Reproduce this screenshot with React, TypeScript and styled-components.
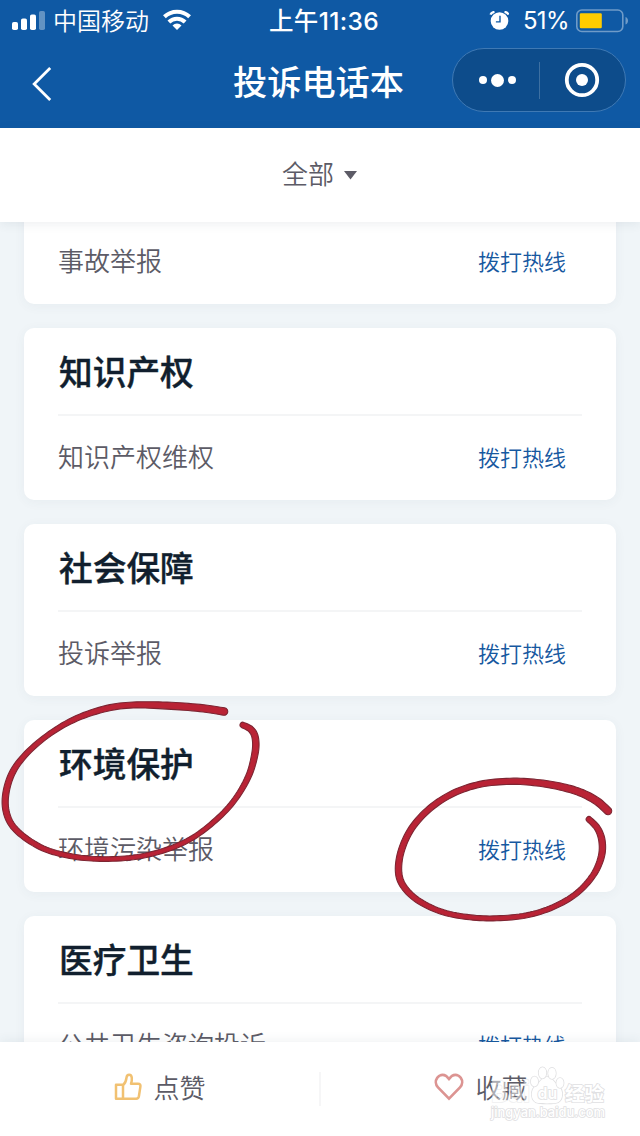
import React from "react";
import styled, { createGlobalStyle } from "styled-components";

const cjk = `"Noto Sans CJK SC", sans-serif`;

const GlobalStyle = createGlobalStyle`
  * { box-sizing: border-box; }
  html, body { margin: 0; padding: 0; }
  body { font-family: ${cjk}; background: #eff4f8; overflow: hidden; }
`;

const Screen = styled.div`
  position: relative;
  width: 640px;
  height: 1136px;
  display: flex;
  flex-direction: column;
  overflow: hidden;
  background: #f0f5f8;
`;

const TopBar = styled.header`
  flex: none;
  height: 128px;
  background: #0f59a4;
  color: #fff;
`;

const StatusBar = styled.div`
  display: grid;
  grid-template-columns: 1fr auto 1fr;
  align-items: center;
  height: 41px;
  padding: 0 11px 0 12px;
`;

const StatusGroup = styled.div<{ $end?: boolean }>`
  display: flex;
  align-items: center;
  justify-content: ${(p) => (p.$end ? "flex-end" : "flex-start")};
`;

const Carrier = styled.span`
  margin: 0 14px 0 7px;
  padding-bottom: 1px;
  font-size: 24px;
  line-height: 40px;
  font-weight: 350;
`;

const Clock = styled.time`
  font: 500 24.5px/40px Inter, ${cjk};
  letter-spacing: 0.35px;
  margin-left: 7px;
  padding-top: 1px;
`;

const Percent = styled.span`
  margin: 1px 6px 0 14px;
  font: 400 24px/40px Inter, sans-serif;
  letter-spacing: -0.6px;
`;

const NavBar = styled.div`
  display: grid;
  grid-template-columns: 1fr auto 1fr;
  align-items: center;
  height: 78px;
  padding: 0 14px 0 32px;
`;

const Title = styled.h1`
  margin: 0 0 0 -21px;
  font-size: 34.2px;
  font-weight: 500;
  line-height: 78px;
`;

const Capsule = styled.div`
  justify-self: end;
  display: flex;
  align-items: center;
  width: 174px;
  height: 64px;
  border: 1px solid #3f79b4;
  border-radius: 32px;
  background: #0d4c8b;
`;

const CapsuleHalf = styled.div<{ $shift?: number }>`
  flex: 1 1 0;
  min-width: 0;
  display: flex;
  align-items: center;
  justify-content: center;
  gap: 4px;

  & > :first-child {
    margin-left: ${(p) => p.$shift ?? 0}px;
  }
`;

const CapsuleRule = styled.div`
  width: 1px;
  height: 37px;
  background: #3d70a2;
`;

const Dot = styled.i<{ $size: number }>`
  width: ${(p) => p.$size}px;
  height: ${(p) => p.$size}px;
  border-radius: 50%;
  background: #fff;
`;

const FilterBar = styled.div`
  position: relative;
  z-index: 1;
  flex: none;
  display: flex;
  align-items: center;
  justify-content: center;
  gap: 10px;
  height: 94px;
  background: #fff;
  color: #5c5b66;
  font-size: 26px;
  font-weight: 350;
  box-shadow: 0 2px 10px rgba(60, 80, 100, 0.09);
`;

const FilterLabel = styled.span`
  padding-bottom: 5px;
`;

const List = styled.main`
  flex: 1;
  min-height: 0;
  display: flex;
  flex-direction: column;
  justify-content: flex-end;
  gap: 24px;
  padding: 0 24px;
  overflow: hidden;
  margin-bottom: -46px;
`;

const Card = styled.section`
  flex: none;
  height: 172px;
  padding: 0 34px;
  border-radius: 10px;
  background: #fff;
  box-shadow: 0 2px 12px rgba(60, 80, 100, 0.05);
`;

const CardTitle = styled.h2`
  margin: 0;
  height: 88px;
  padding-left: 1px;
  border-bottom: 2px solid #f4f5f6;
  color: #111f2e;
  font-size: 33.7px;
  font-weight: 500;
  -webkit-text-stroke: 0.4px #111f2e;
  line-height: 86px;
`;

const Row = styled.div`
  display: flex;
  align-items: center;
  justify-content: space-between;
  height: 80px;
  padding-right: 16px;
`;

const RowName = styled.span`
  padding-bottom: 2px;
  color: #5c5b66;
  font-size: 26px;
  font-weight: 350;
`;

const Call = styled.a`
  color: #16589f;
  font-size: 22px;
  font-weight: 350;
`;

const BottomBar = styled.footer`
  position: relative;
  z-index: 1;
  flex: none;
  display: flex;
  align-items: center;
  height: 94px;
  background: #fff;
  box-shadow: 0 -2px 10px rgba(60, 80, 100, 0.07);
`;

const Action = styled.button`
  flex: 1 1 0;
  display: flex;
  align-items: center;
  justify-content: center;
  gap: 11px;
  padding: 0 0 4px 1px;
  border: 0;
  background: none;
  color: #5c5b66;
  font: 350 26px/40px ${cjk};
`;

const ActionRule = styled.div`
  width: 2px;
  height: 34px;
  background: #f6f6f7;
`;

const Marks = styled.svg`
  position: absolute;
  inset: 0;
  z-index: 2;
  pointer-events: none;
`;

const Watermark = styled.svg`
  position: absolute;
  left: 480px;
  top: 1060px;
  z-index: 3;
`;

type Pt = [number, number, number];

const titleLoop: Pt[] = [
  [224, 711.5, 7.5], [200, 708, 7.2], [167, 705.6, 7], [133, 705, 6], [107, 708.3, 6], [76.7, 718.3, 5.5],
  [50, 733.6, 5], [26.7, 753.3, 5.3], [11.7, 774, 6], [5.3, 798.3, 6.2], [8.3, 818.3, 6], [20, 833.6, 5.6],
  [43, 848.3, 5.2], [70, 856, 5], [100, 859, 4.7], [133.3, 857.4, 4.6], [163.3, 850.7, 4.6], [190, 839.3, 4.6],
  [213.3, 822.3, 4.8], [233.3, 801.7, 5], [248.3, 776.7, 5.6], [255, 753.3, 6.4], [255.3, 738, 6.4],
  [251, 729.5, 6.2], [242.8, 725, 5.6],
];

const callLoop: Pt[] = [
  [608, 811, 7.5], [596.7, 801, 7.5], [580, 792.3, 7.3], [560, 786.5, 7], [536.7, 782.7, 6.5], [510, 781.3, 6.2],
  [480, 784.3, 6], [453.3, 793.3, 6], [430, 808.3, 6], [411.7, 828.3, 6], [401, 851.7, 6.2], [398.7, 873.3, 6.4],
  [405, 888.3, 6], [420, 901.7, 5.6], [443.3, 912.3, 5.2], [470, 917.3, 5], [496.7, 918.3, 5], [526.7, 915.3, 5],
  [553.3, 907, 5], [576.7, 893.3, 5.2], [593.3, 875, 5.6], [601.3, 856.7, 6.2], [602, 841, 6.4],
  [597.5, 828.3, 6], [589, 819.3, 5.6],
];

// Smooth the control points, then sweep a round brush of varying width along them.
function brush(points: Pt[]): string {
  const line: Pt[] = [];
  for (let i = 0; i < points.length - 1; i++) {
    const a = points[Math.max(i - 1, 0)];
    const b = points[i];
    const c = points[i + 1];
    const d = points[Math.min(i + 2, points.length - 1)];
    for (let s = 0; s < 8; s++) {
      const t = s / 8;
      line.push([0, 1, 2].map((k) =>
        0.5 * (2 * b[k] + (c[k] - a[k]) * t + (2 * a[k] - 5 * b[k] + 4 * c[k] - d[k]) * t * t +
          (3 * b[k] - a[k] - 3 * c[k] + d[k]) * t * t * t)) as Pt);
    }
  }
  line.push(points[points.length - 1]);
  const left: string[] = [];
  const right: string[] = [];
  line.forEach((p, i) => {
    const q = line[Math.max(i - 1, 0)];
    const r = line[Math.min(i + 1, line.length - 1)];
    const len = Math.hypot(r[0] - q[0], r[1] - q[1]) || 1;
    const nx = (-(r[1] - q[1]) / len) * (p[2] / 2);
    const ny = ((r[0] - q[0]) / len) * (p[2] / 2);
    left.push(`${(p[0] + nx).toFixed(2)} ${(p[1] + ny).toFixed(2)}`);
    right.unshift(`${(p[0] - nx).toFixed(2)} ${(p[1] - ny).toFixed(2)}`);
  });
  const end = points[points.length - 1][2] / 2;
  const start = points[0][2] / 2;
  return `M${left.join("L")}A${end} ${end} 0 0 0 ${right[0]}L${right.join("L")}A${start} ${start} 0 0 0 ${left[0]}Z`;
}

const SignalIcon = () => (
  <svg width="34" height="20" viewBox="0 0 34 20" fill="#fff">
    <rect x="0" y="11" width="6" height="8" rx="1.8" />
    <rect x="9" y="7.500" width="6" height="11.500" rx="1.8" />
    <rect x="18" y="3.500" width="6" height="15.500" rx="1.8" />
    <rect x="27" y="0" width="6" height="19" rx="1.8" opacity=".35" />
  </svg>
);

const WifiIcon = () => (
  <svg width="28" height="24" viewBox="0 0 28 24" fill="none" stroke="#fff" strokeWidth="4">
    <path d="M1.400 7.700a18.200 18.200 0 0 1 25.200 0" />
    <path d="M5.900 13a11.600 11.600 0 0 1 16.200 0" />
    <path d="M14 21l-4.500-4.600a6.300 6.300 0 0 1 9 0z" fill="#fff" stroke="none" />
  </svg>
);

const AlarmIcon = () => (
  <svg width="20" height="20" viewBox="0 0 20 20">
    <circle cx="10.500" cy="10" r="8.800" fill="#fff" />
    <path d="M1.500 3.700Q2.300 1.300 5.500 .8M19.500 3.700Q18.700 1.300 15.500 .8" fill="none" stroke="#fff" strokeWidth="2.200" />
    <path d="M11 4.700v6.200H6.900" fill="none" stroke="#0f59a4" strokeWidth="1.400" />
  </svg>
);

const BatteryIcon = () => (
  <svg width="54" height="24" viewBox="0 0 54 24">
    <rect x="1.800" y="1" width="46" height="21.500" rx="5" fill="none" stroke="#6f9bc8" strokeWidth="1.600" />
    <rect x="4.800" y="4.200" width="22" height="15" rx="1.200" fill="#ffcc00" />
    <path d="M50.500 8v7.500c3.400-1.200 3.400-6.300 0-7.500z" fill="#6f9bc8" />
  </svg>
);

const BackIcon = () => (
  <svg width="20" height="44" viewBox="0 -8 20 44" fill="none" stroke="#fff" strokeWidth="2.800">
    <path d="M18.200 2L2.200 18l16 16" />
  </svg>
);

const TargetIcon = () => (
  <svg width="36" height="36" viewBox="0 0 36 36">
    <circle cx="18" cy="18" r="15.200" fill="none" stroke="#fff" strokeWidth="3.800" />
    <circle cx="18" cy="18" r="6" fill="#fff" />
  </svg>
);

const ThumbIcon = () => (
  <svg width="28" height="28" viewBox="0 0 28 28" fill="none" stroke="#f1c172" strokeWidth="2.500" strokeLinejoin="round">
    <path d="M2 11.800h7V25.700H2zM9 12.200c2.300-2 3.200-4.300 3.500-7.500.4-4 4.900-4.200 5.300.2.200 2-.1 4-.8 5.900h7c2 0 2.700 1.200 2.400 2.800l-1.500 9.700c-.3 1.600-1.200 2.400-2.600 2.400H9z" />
  </svg>
);

const HeartIcon = () => (
  <svg width="30" height="28" viewBox="0 0 30 28" fill="none" stroke="#dc9492" strokeWidth="2.700">
    <path d="M15 25.600L4 14.400C-1.600 8.500 4.800-1.500 12.400 3.200L15 6l2.600-2.800C25.200-1.500 31.600 8.500 26 14.400z" />
  </svg>
);

const sections = [
  { title: "", item: "事故举报" },
  { title: "知识产权", item: "知识产权维权" },
  { title: "社会保障", item: "投诉举报" },
  { title: "环境保护", item: "环境污染举报" },
  { title: "医疗卫生", item: "公共卫生咨询投诉" },
];

export default function App() {
  return (
    <>
      <GlobalStyle />
      <Screen>
        <TopBar>
          <StatusBar>
            <StatusGroup>
              <SignalIcon />
              <Carrier>中国移动</Carrier>
              <WifiIcon />
            </StatusGroup>
            <Clock>上午11:36</Clock>
            <StatusGroup $end>
              <AlarmIcon />
              <Percent>51%</Percent>
              <BatteryIcon />
            </StatusGroup>
          </StatusBar>
          <NavBar>
            <BackIcon />
            <Title>投诉电话本</Title>
            <Capsule>
              <CapsuleHalf $shift={3}>
                <Dot $size={8} />
                <Dot $size={13} />
                <Dot $size={8} />
              </CapsuleHalf>
              <CapsuleRule />
              <CapsuleHalf>
                <TargetIcon />
              </CapsuleHalf>
            </Capsule>
          </NavBar>
        </TopBar>
        <FilterBar>
          <FilterLabel>全部</FilterLabel>
          <svg width="14" height="10" viewBox="0 0 14 10" fill="#5c5b66">
            <path d="M0 1h13L6.500 9.500z" />
          </svg>
        </FilterBar>
        <List>
          {sections.map((s) => (
            <Card key={s.item}>
              <CardTitle>{s.title}</CardTitle>
              <Row>
                <RowName>{s.item}</RowName>
                <Call>拨打热线</Call>
              </Row>
            </Card>
          ))}
        </List>
        <BottomBar>
          <Action>
            <ThumbIcon />
            点赞
          </Action>
          <ActionRule />
          <Action>
            <HeartIcon />
            收藏
          </Action>
        </BottomBar>
        <Marks width="640" height="1136" viewBox="0 0 640 1136" fill="#b92335" stroke="#7d2532" strokeWidth="1.100">
          <path d={brush(titleLoop)} />
          <path d={brush(callLoop)} />
        </Marks>
        <Watermark width="140" height="66" viewBox="0 0 140 66" fill="#fff" stroke="#e0e0e2" strokeWidth="1.600" paintOrder="stroke">
          <text x="11" y="42" fontFamily="Inter" fontSize="29" fontWeight="700" opacity=".5" textLength="39" lengthAdjust="spacingAndGlyphs">Bai</text>
          <path d="M67 17c-5.500 0-6.500 5-10.500 8-7 5-6 17 2 18 4 .5 13 .5 17 0 8-1 9-13 2-18-4-3-5-8-10.500-8z" />
          <ellipse cx="54.500" cy="21.500" rx="3.600" ry="5" />
          <ellipse cx="62.500" cy="12.800" rx="3.800" ry="5.600" />
          <ellipse cx="72" cy="13.300" rx="3.800" ry="5.600" />
          <ellipse cx="80" cy="23" rx="3.600" ry="5" />
          <text x="57.500" y="39" fontFamily="Inter" fontSize="16" fontWeight="600">du</text>
          <text x="85" y="41" fontFamily="Noto Sans CJK SC" fontSize="19.500" fontWeight="700">经验</text>
          <text x="11" y="57" fontFamily="Inter" fontSize="13" fontWeight="500" textLength="114">jingyan.baidu.com</text>
        </Watermark>
      </Screen>
    </>
  );
}
